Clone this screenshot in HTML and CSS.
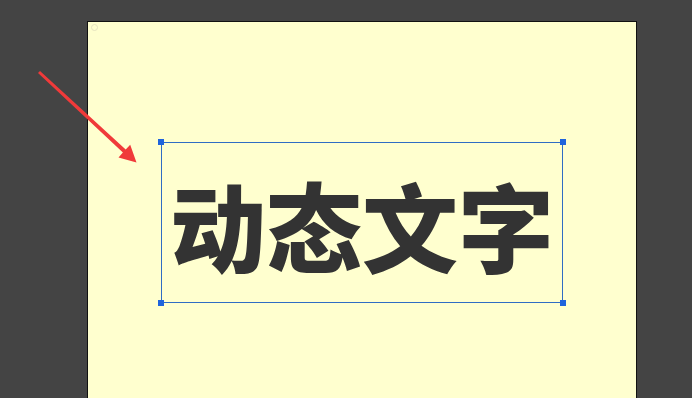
FILE: index.html
```html
<!DOCTYPE html>
<html lang="zh">
<head>
<meta charset="utf-8">
<link rel="stylesheet" href="styles.css">
</head>
<body>
<div class="stage">
  <div class="artboard">
    <span class="mark"></span>
    <div class="selection">
      <span class="handle tl"></span>
      <span class="handle tr"></span>
      <span class="handle bl"></span>
      <span class="handle br"></span>
      <div class="text">动态文字</div>
    </div>
  </div>
</div>
<svg class="arrow" width="692" height="398" viewBox="0 0 692 398">
  <polygon points="38,73 40,71 125.7,149.6 130.2,144.8 136.5,162.5 118.5,157.5 122.9,152.6" fill="#f03a3a"/>
</svg>
</body>
</html>
```
FILE: styles.css
```css
html, body {
  margin: 0;
  padding: 0;
  height: 100%;
  overflow: hidden;
}
body {
  background: #444444;
  font-family: "Noto Sans CJK SC", "Noto Sans", sans-serif;
}
.stage {
  display: flex;
  flex-direction: column;
  padding: 21px 0 0 87px;
  height: 100%;
  box-sizing: border-box;
}
.artboard {
  position: relative;
  flex: 1;
  width: 550px;
  box-sizing: border-box;
  background: #ffffcf;
  border: 1px solid #111;
  border-bottom: none;
  padding: 120px 0 0 73px;
}
.mark {
  position: absolute;
  left: 3px;
  top: 2px;
  width: 5px;
  height: 5px;
  border: 1px solid #e6e4c0;
  border-radius: 50%;
}
.selection {
  position: relative;
  width: 402px;
  height: 161px;
  box-sizing: border-box;
  border: 1px solid #2f6dc4;
  display: flex;
  align-items: center;
  justify-content: center;
}
.text {
  font-size: 96px;
  font-weight: 900;
  color: #333333;
  line-height: 1;
  letter-spacing: 0;
  margin-top: 2px;
  white-space: nowrap;
}
.handle {
  position: absolute;
  width: 6px;
  height: 6px;
  background: #1f64dc;
}
.tl { left: -4px; top: -4px; }
.tr { right: -4px; top: -4px; }
.bl { left: -4px; bottom: -4px; }
.br { right: -4px; bottom: -4px; }
.arrow {
  position: absolute;
  left: 0;
  top: 0;
  pointer-events: none;
}
```
